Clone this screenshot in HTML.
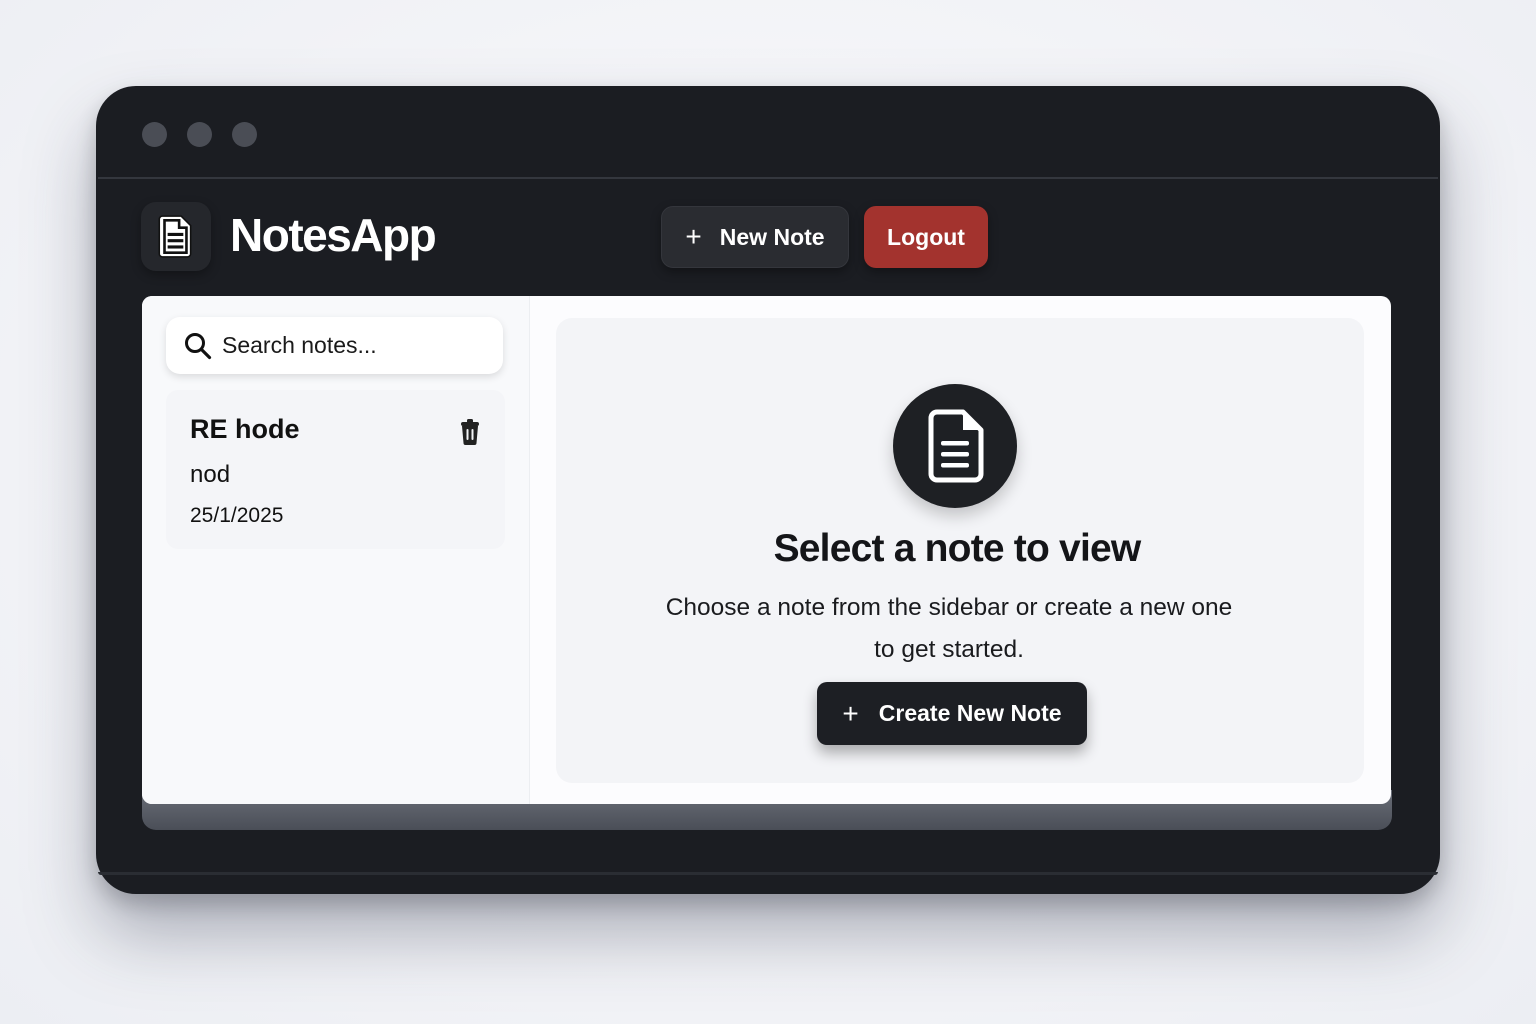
<!DOCTYPE html>
<html><head><style>
*{margin:0;padding:0;box-sizing:border-box}
body{width:1536px;height:1024px;overflow:hidden;background:radial-gradient(ellipse at 50% 45%,#fbfbfd 0%,#f1f2f6 70%,#eceef3 100%);font-family:"Liberation Sans","DejaVu Sans",sans-serif;position:relative}
.abs{position:absolute}
.frame{left:96px;top:86px;width:1344px;height:808px;border-radius:40px;background:#1b1d22;box-shadow:0 40px 70px rgba(40,45,70,.35),0 10px 20px rgba(0,0,0,.2)}
.dot{width:25px;height:25px;border-radius:50%;background:#4a4d55;top:122px}
.btn{display:flex;align-items:center;justify-content:center;color:#fff;font-weight:bold;font-size:23px;border-radius:12px}
</style></head><body>
<div class="abs frame"></div>
<div class="abs" style="left:98px;top:177px;width:1340px;height:2px;background:#34373e"></div>
<div class="abs" style="left:98px;top:872px;width:1340px;height:3px;background:#2a2d33;border-radius:0 0 30px 30px"></div>
<div class="abs dot" style="left:142px"></div>
<div class="abs dot" style="left:187px"></div>
<div class="abs dot" style="left:232px"></div>
<div class="abs" style="left:141px;top:202px;width:70px;height:69px;border-radius:15px;background:#25272c;box-shadow:0 4px 10px rgba(0,0,0,.3)"></div>
<svg class="abs" style="left:157px;top:213px" width="38" height="46" viewBox="0 0 36 44"><path d="M5 3h18l9 9v27a3 3 0 0 1-3 3H5a3 3 0 0 1-3-3V6a3 3 0 0 1 3-3z" fill="#fff" stroke="#111" stroke-width="1.5"/><path d="M7 7h14v7h7v24H7z" fill="#fff" stroke="#111" stroke-width="2.5"/><rect x="10" y="19" width="15" height="3" fill="#111"/><rect x="10" y="25" width="15" height="3" fill="#111"/><rect x="10" y="31" width="15" height="3" fill="#111"/></svg>
<div class="abs" style="left:230px;top:208px;color:#fff;font-weight:bold;font-size:46px;letter-spacing:-1.5px">NotesApp</div>
<div class="abs btn" style="left:661px;top:206px;width:188px;height:62px;background:#2a2c31;border:1px solid #34363c;box-shadow:0 4px 10px rgba(0,0,0,.35)"><span style="font-size:28px;margin-right:18px;font-weight:normal">+</span>New Note</div>
<div class="abs btn" style="left:864px;top:206px;width:124px;height:62px;background:#a3332e;box-shadow:0 4px 10px rgba(0,0,0,.35)">Logout</div>
<div class="abs" style="left:142px;top:790px;width:1250px;height:40px;border-radius:0 0 14px 14px;background:linear-gradient(#6a6e78,#4a4e57)"></div>
<div class="abs" style="left:142px;top:296px;width:1249px;height:508px;border-radius:10px;background:#fcfcfe;overflow:hidden">
 <div class="abs" style="left:0;top:0;width:388px;height:508px;background:#f8f9fb;border-right:1px solid #eceef1"></div>
</div>
<div class="abs" style="left:166px;top:317px;width:337px;height:57px;background:#fff;border-radius:14px;box-shadow:0 3px 8px rgba(0,0,0,.12);display:flex;align-items:center;padding-left:18px;font-size:23px;color:#1a1a1a">
<svg width="28" height="28" viewBox="0 0 28 28" style="margin-right:10px"><circle cx="11" cy="11" r="8.5" fill="none" stroke="#111" stroke-width="3"/><path d="M17.5 17.5l8 8" stroke="#111" stroke-width="3.2" stroke-linecap="round"/></svg>Search notes...</div>
<div class="abs" style="left:166px;top:390px;width:339px;height:159px;background:#f4f5f8;border-radius:12px"></div>
<div class="abs" style="left:190px;top:414px;font-size:27px;font-weight:bold;color:#111">RE hode</div>
<div class="abs" style="left:190px;top:461px;font-size:24px;color:#111">nod</div>
<div class="abs" style="left:190px;top:504px;font-size:21px;color:#111">25/1/2025</div>
<svg class="abs" style="left:459px;top:419px" width="22" height="26" viewBox="0 0 22 26"><rect x="2" y="3" width="18" height="4" rx="2" fill="#222"/><rect x="8" y="0" width="6" height="4" rx="1.5" fill="#222"/><path d="M3 7h16l-1.5 17a2 2 0 0 1-2 2h-9a2 2 0 0 1-2-2z" fill="#222"/><rect x="7.5" y="10" width="2" height="11" rx="1" fill="#f3f4f7"/><rect x="12.5" y="10" width="2" height="11" rx="1" fill="#f3f4f7"/></svg>
<div class="abs" style="left:556px;top:318px;width:808px;height:465px;background:#f3f4f7;border-radius:16px"></div>
<div class="abs" style="left:893px;top:384px;width:124px;height:124px;border-radius:50%;background:#1e2024;box-shadow:0 8px 16px rgba(0,0,0,.2)"></div>
<svg class="abs" style="left:928px;top:409px" width="56" height="74" viewBox="0 0 56 74"><path d="M9 3h26l18 18v44a6 6 0 0 1-6 6H9a6 6 0 0 1-6-6V9a6 6 0 0 1 6-6z" fill="none" stroke="#fff" stroke-width="5" stroke-linejoin="round"/><path d="M35 4v17h17z" fill="#fff"/><rect x="13" y="32" width="28" height="4.5" rx="2" fill="#fff"/><rect x="13" y="43" width="28" height="4.5" rx="2" fill="#fff"/><rect x="13" y="54" width="28" height="4.5" rx="2" fill="#fff"/></svg>
<div class="abs" style="left:556px;top:527px;width:802px;text-align:center;font-size:39px;font-weight:bold;color:#141518;letter-spacing:-0.8px">Select a note to view</div>
<div class="abs" style="left:590px;top:587px;width:718px;text-align:center;font-size:24.5px;line-height:42px;color:#1a1b1e">Choose a note from the sidebar or create a new one<br>to get started.</div>
<div class="abs btn" style="left:817px;top:682px;width:270px;height:63px;background:#1d1f24;border-radius:10px;box-shadow:0 8px 14px rgba(0,0,0,.3)"><span style="font-size:28px;margin-right:20px;font-weight:normal">+</span>Create New Note</div>
</body></html>
